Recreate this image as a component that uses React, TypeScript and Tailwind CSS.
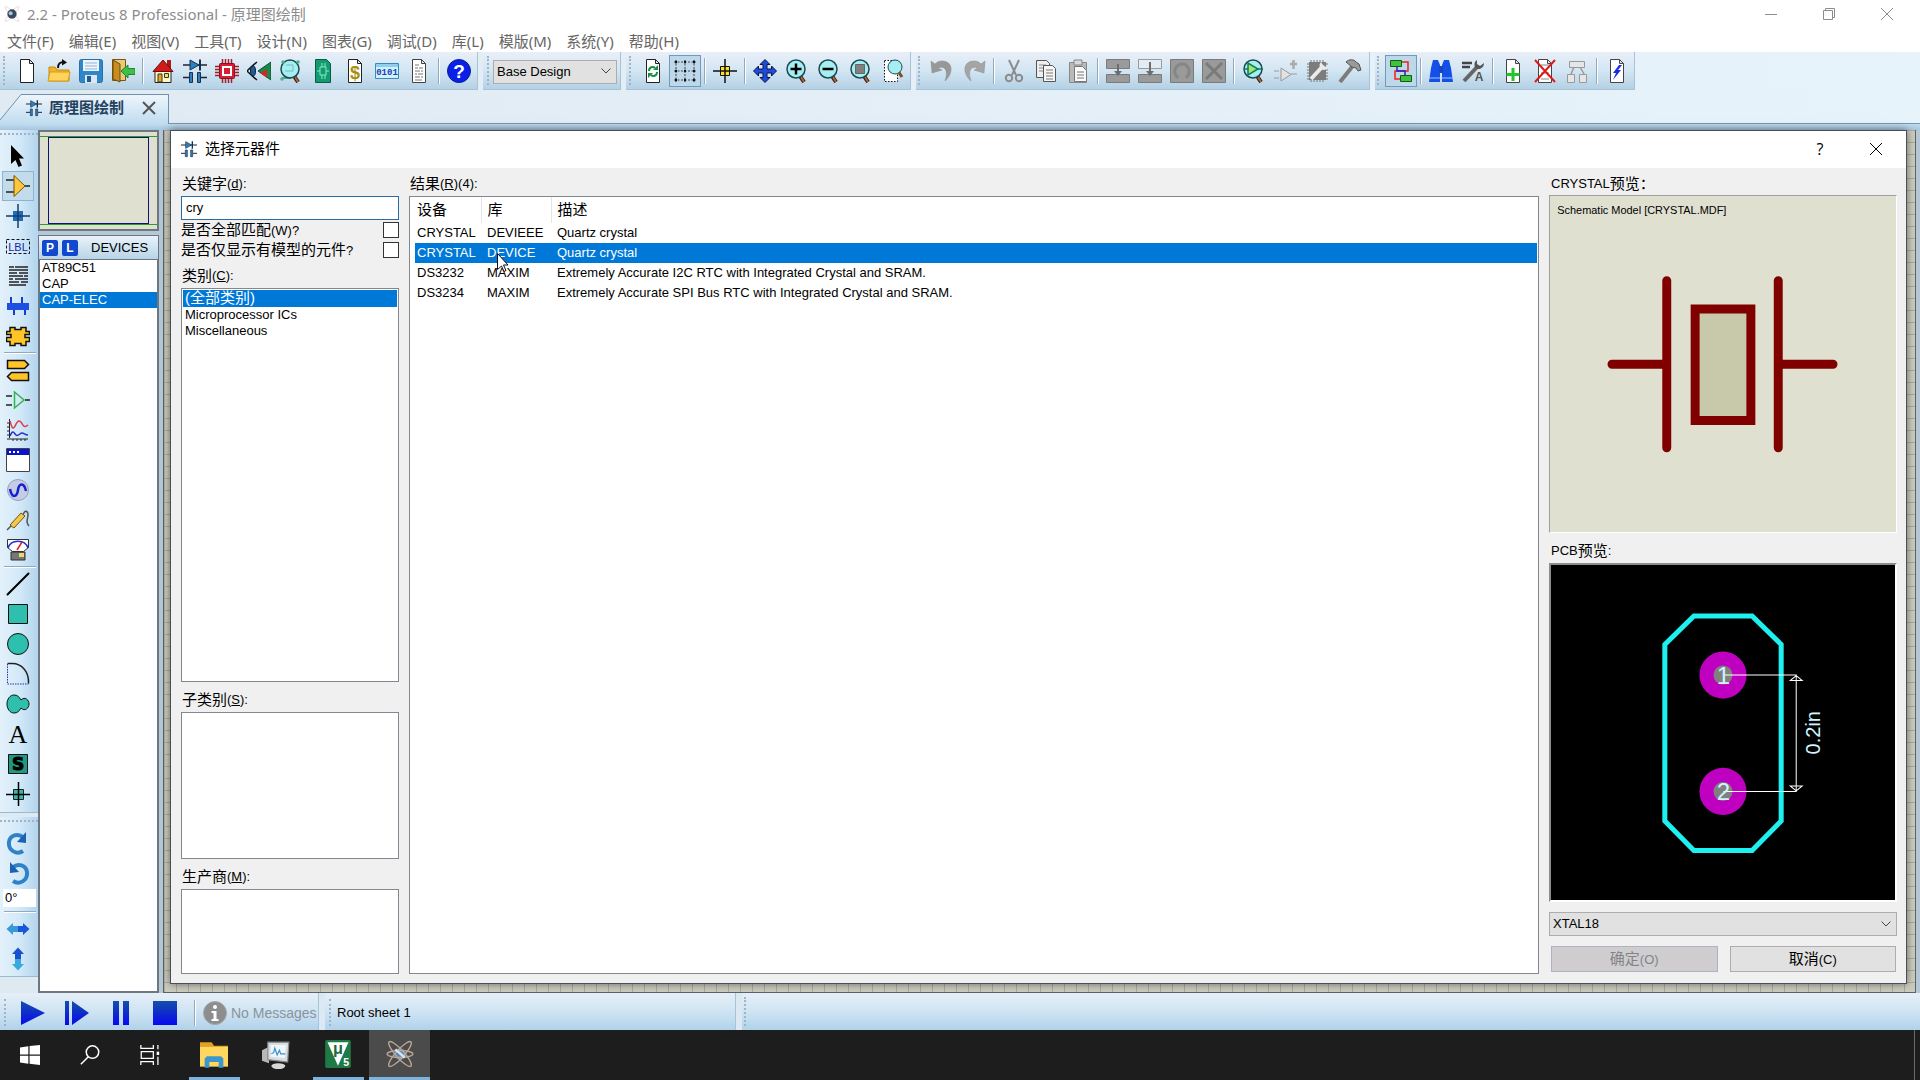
/**
 * 原理图绘制主窗口 + 选择元器件对话框
 */

import { useState } from 'react';
import type { ReactNode } from 'react';

interface Part { device: string; lib: string; desc: string; }
interface Tool { name: string; icon: ReactNode; active?: boolean; }

const MENUS = ['文件(F)', '编辑(E)', '视图(V)', '工具(T)', '设计(N)', '图表(G)', '调试(D)', '库(L)', '模版(M)', '系统(Y)', '帮助(H)'];
const DEVICES = ['AT89C51', 'CAP', 'CAP-ELEC'];
const CATEGORIES = ['(全部类别)', 'Microprocessor ICs', 'Miscellaneous'];
const PARTS: Part[] = [
  { device: 'CRYSTAL', lib: 'DEVIEEE', desc: 'Quartz crystal' },
  { device: 'CRYSTAL', lib: 'DEVICE', desc: 'Quartz crystal' },
  { device: 'DS3232', lib: 'MAXIM', desc: 'Extremely Accurate I2C RTC with Integrated Crystal and SRAM.' },
  { device: 'DS3234', lib: 'MAXIM', desc: 'Extremely Accurate SPI Bus RTC with Integrated Crystal and SRAM.' },
];

function Svg({ children, size = 'w-6 h-6' }: { children: ReactNode; size?: string }) {
  return <svg viewBox="0 0 24 24" className={`${size} shrink-0`} fill="none" aria-hidden="true">{children}</svg>;
}

// ── 共用图形 ──
const page = <path d="M5.500.500h9l4 4v19h-13zM14.500.500v4h4" fill="#fff" stroke="#222" />;
const greyPage = <path d="M5.500.500h9l4 4v19h-13zM14.500.500v4h4" fill="#fff" stroke="#444" />;
const lens = (
  <>
    <path d="M15 17l4 6" stroke="#222" strokeWidth="4" />
    <path d="M16 18l3 5" stroke="#b8622c" strokeWidth="2" />
    <circle cx="11" cy="10" r="9" fill="#a5eef2" stroke="#1c4a50" strokeWidth="1.5" />
  </>
);
const schematic = (
  <>
    <path d="M0 6h24M0 18.500h6M18 18.500h6" stroke="#223" strokeWidth="1.5" />
    <path d="M7 1v10l9-5z" fill="#2f80c0" stroke="#16324e" />
    <path d="M17 .500v11" stroke="#16324e" strokeWidth="2" />
    <path d="M6.500 13.500h3v10h-3zM14.500 13.500h3v10h-3z" fill="#2f80c0" stroke="#16324e" />
  </>
);
const greyBlocks = <path d="M.500.500h23v9H.500zM.500 15.500h23v8H.500z" fill="#9a9a9a" stroke="#7b7b7b" />;

const FILE_TOOLS: Tool[] = [
  { name: '新建', icon: page },
  { name: '打开', icon: <><path d="M2 22V8h6l2 3h12v11z" fill="#f0b428" stroke="#c98a10" /><path d="M1 22l2-9h20l-2 9z" fill="#ffd45a" stroke="#d79a18" /><path d="M11 9c0-5 2-6 6-6" stroke="#111" strokeWidth="2" /><path d="M15 0l5 3.500-5 3z" fill="#111" /></> },
  { name: '保存', icon: <><rect x=".5" y=".5" width="23" height="23" rx="2" fill="#2f86c8" stroke="#2770ab" /><path d="M4 1h16v11H4z" fill="#eef4fa" /><path d="M6 4h12M6 7h12M6 10h12" stroke="#8fb6d6" /><path d="M6 16h12v8H6z" fill="#dfe7ee" /><path d="M8 17h4v6H8z" fill="#1d5c96" /></> },
  { name: '退出', icon: <><path d="M1.500.500h13v21h-13z" fill="#e9c878" stroke="#7c5410" /><path d="M2 1l7 4v18l-7-3z" fill="#c98d1d" stroke="#6b4a10" /><path d="M10 12l7-6v3.500h7v6h-7V19z" fill="#3cc04a" stroke="#1e8a2c" /></> },
];
const MODULE_TOOLS: Tool[] = [
  { name: '主页', icon: <><path d="M4 11v12.500h16V11" fill="#fff6c8" stroke="#222" /><path d="M16 1h4v9h-4z" fill="#b01818" /><path d="M12 1L2 12.500h20z" fill="#d31a1a" stroke="#6e0c0c" /><path d="M7 15h4v8H7z" fill="#e8a818" stroke="#333" /><path d="M13.500 14.500h4v4h-4z" fill="#ffe040" stroke="#333" /></> },
  { name: '原理图', icon: schematic },
  { name: 'PCB布版', icon: <><path d="M7.500 0v24M10.500 0v24M13.500 0v24M16.500 0v24M0 7.500h24M0 10.500h24M0 13.500h24M0 16.500h24" stroke="#a02030" strokeWidth="1.5" /><rect x="4.500" y="4.500" width="15" height="15" rx="1" fill="#d81c34" stroke="#8e0f20" /><path d="M7 7h10v10H7z" fill="#fff" /><path d="M9 9h6v6H9z" fill="#d81c34" /></> },
  { name: '3D观察', icon: <><path d="M10 3C5 7 2 10 0 12c3 3 6 6 10 9" stroke="#111" strokeWidth="1.5" /><ellipse cx="6" cy="12" rx="2.500" ry="5" fill="#1d5d9c" stroke="#123" /><path d="M24 3v18L11 12z" fill="#188a48" stroke="#0c5028" /><path d="M20 10v9l-7-5z" fill="#d02828" /></> },
  { name: 'Gerber', icon: <><path d="M4 3h12M3 19h9" stroke="#2a8f70" strokeWidth="1.5" />{lens}<circle cx="4" cy="3" r="1.800" fill="#4bb394" /><circle cx="19" cy="3" r="1.800" fill="#4bb394" /><path d="M7 6h7v6H6" stroke="#6fc0bd" /><circle cx="3" cy="20" r="1.800" fill="#4bb394" /></> },
  { name: '设计浏览', icon: <><path d="M4.500.500h11l4 4v19h-15z" fill="#149a70" stroke="#0b5c45" /><path d="M9 8h6v8H9zM11 8V4M14 8V4M11 16v4M14 16v4M6 12h3M15 12h3" stroke="#7ff0c0" /></> },
  { name: '物料清单', icon: <>{page}<text x="12" y="20" textAnchor="middle" fontSize="18" fontWeight="700" fill="#a89010" fontFamily="Liberation Sans">$</text></> },
  { name: '源代码', icon: <><path d="M.500 4.500h23v15H.500z" fill="#d2f1fb" stroke="#3a8ab8" /><path d="M1 5h22v3H1z" fill="#8cd0ee" /><text x="12" y="15.500" textAnchor="middle" fontSize="9" fontWeight="700" fill="#1540b8" fontFamily="Liberation Mono">0101</text></> },
  { name: '工程说明', icon: <>{greyPage}<path d="M8 6h4M8 9h3M12 9h4M8 12h5M14 12h2M8 15h2M11 15h5M8 18h5M14 18h2M8 21h7" stroke="#777" /></> },
];
const HELP_TOOLS: Tool[] = [
  { name: '帮助', icon: <><circle cx="12" cy="12" r="11.500" fill="#0a1fe8" stroke="#0a1f96" /><text x="12" y="19" textAnchor="middle" fontSize="19" fontWeight="700" fill="#fff" fontFamily="Liberation Sans">?</text></> },
];
const VIEW_TOOLS: Tool[] = [
  { name: '刷新', icon: <>{page}<path d="M8 12c0-4 4-5 6-3M16 13c0 4-4 5-6 3" stroke="#189040" strokeWidth="2" /><path d="M12 11l5 0V6zM12 14H7v5z" fill="#189040" /></> },
  { name: '网格', active: true, icon: <><path d="M1 3h22M1 12h22M1 21h22M3 1v22M12 1v22M21 1v22" stroke="#445" strokeDasharray="2 1.500" /><path d="M2 3h2M11 3h2M20 3h2M2 12h2M11 12h2M20 12h2M2 21h2M11 21h2M20 21h2" stroke="#111" strokeWidth="2.500" /></> },
];
const ORIGIN_TOOLS: Tool[] = [
  { name: '原点', icon: <><path d="M7.500 7.500h9v9h-9z" fill="#ffe21f" stroke="#111" /><path d="M0 12h24M12 0v24" stroke="#111" strokeWidth="1.500" /></> },
];
const ZOOM_TOOLS: Tool[] = [
  { name: '平移', icon: <path d="M12 .500l5 5h-3v4.500h4.500V7l5 5-5 5v-3H14v4.500h3l-5 5-5-5h3V14H5.500v3l-5-5 5-5v3H10V5.500H7z" fill="#1c4be0" stroke="#0a1540" /> },
  { name: '放大', icon: <>{lens}<path d="M5.500 10h11M11 4.500v11" stroke="#000" strokeWidth="2.500" /></> },
  { name: '缩小', icon: <>{lens}<path d="M5.500 10h11" stroke="#000" strokeWidth="2.500" /></> },
  { name: '查看整张', icon: <>{lens}<path d="M6.500 5.500h9v9h-9z" fill="#808080" stroke="#666" /></> },
  { name: '查看区域', icon: <><path d="M3.500 1.500h13v21h-13z" fill="#fff" stroke="#111" strokeDasharray="1.500 1.500" /><path d="M17 12l4 6" stroke="#8a4a20" strokeWidth="3" /><circle cx="14" cy="8" r="7" fill="#a5eef2" stroke="#1c4a50" /></> },
];
const UNDO_TOOLS: Tool[] = [
  { name: '撤销', icon: <path d="M1 2l1 12 10-3-4-2c6-3 11 2 7 13 9-8 8-20-3-20-3 0-5 1-7 3z" fill="#989898" stroke="#888" strokeWidth=".5" /> },
  { name: '重做', icon: <path d="M23 2l-1 12-10-3 4-2C10 6 5 11 9 22 0 14 1 2 12 2c3 0 5 1 7 3z" fill="#a5a5a5" stroke="#888" strokeWidth=".5" /> },
];
const CLIP_TOOLS: Tool[] = [
  { name: '剪切', icon: <><path d="M7 1l7 15M17 1l-7 15" stroke="#8c8c8c" strokeWidth="2" /><circle cx="7" cy="19" r="3.200" stroke="#8c8c8c" strokeWidth="2" /><circle cx="17" cy="19" r="3.200" stroke="#8c8c8c" strokeWidth="2" /></> },
  { name: '复制', icon: <><path d="M2.500 1.500h10l3 3v14h-13z" fill="#eee" stroke="#555" /><path d="M5 6h7M5 9h7M5 12h7" stroke="#888" /><path d="M9.500 6.500h9l3 3v13h-12z" fill="#f6f6f6" stroke="#555" /><path d="M12 11h7M12 14h7M12 17h7M12 20h7" stroke="#777" /></> },
  { name: '粘贴', icon: <><path d="M3.500 3.500h17v20h-17z" fill="#b9b9b9" stroke="#888" /><path d="M8 1h8v5H8z" fill="#d8d8d8" stroke="#888" /><path d="M8.500 7.500h8l4 4v11h-12z" fill="#fafafa" stroke="#777" /><path d="M11 13h7M11 16h7M11 19h7" stroke="#777" /></> },
];
const BLOCK_TOOLS: Tool[] = [
  { name: '块复制', icon: <>{greyBlocks}<path d="M12 5v10" stroke="#6d6d6d" strokeWidth="2" /><path d="M8 12h8l-4 5z" fill="#6d6d6d" /></> },
  { name: '块移动', icon: <><path d="M.500.500h23v9H.500z" fill="#e4ecf3" stroke="#999" /><path d="M.500 15.500h23v8H.500z" fill="#9a9a9a" stroke="#7b7b7b" /><path d="M12 3v12" stroke="#6d6d6d" strokeWidth="2" /><path d="M8 12h8l-4 5z" fill="#6d6d6d" /></> },
  { name: '块旋转', icon: <><path d="M.500.500h23v23H.500z" fill="#9a9a9a" stroke="#7b7b7b" /><path d="M8 19c-7-7-1-14 4-14s11 7 4 14" stroke="#868686" strokeWidth="3" /></> },
  { name: '块删除', icon: <><path d="M.500.500h23v23H.500z" fill="#9a9a9a" stroke="#7b7b7b" /><path d="M4 4l16 16M20 4L4 20" stroke="#7a7a7a" strokeWidth="3" /></> },
];
const LIB_TOOLS: Tool[] = [
  { name: '从库拾取', icon: <>{lens}<path d="M3 10h18" stroke="#157a5a" strokeWidth="1.500" /><path d="M6 4v12l10-6z" fill="#9be872" stroke="#157a5a" strokeWidth="1.500" /></> },
  { name: '制作元件', icon: <><path d="M0 12h5M0 19h5M17 15h6M7 9v13l10-6.500z" fill="#e2e2e2" stroke="#999" /><path d="M16 5h7M19.500 1v9" stroke="#aaa" strokeWidth="2.500" /></> },
  { name: '封装工具', icon: <><path d="M5 1v22M8 1v22M11 1v22M14 1v22M17 1v22M1 5h21M1 8h21M1 11h21M1 14h21M1 17h21M1 20h21" stroke="#777" /><path d="M3 3h17v18H3z" fill="#7c7c7c" /><path d="M5 20L17 7" stroke="#eaeaea" strokeWidth="4" /><path d="M15 3c-3 3-1 8 3 8 3 0 5-3 5-6l-3 3-3-2z" fill="#eaeaea" /></> },
  { name: '分解', icon: <><path d="M2 23L14 8" stroke="#7c7c7c" strokeWidth="4" /><path d="M8 3c3-3 8-3 10 0l3 2 2 6-3 1-2-3-4-1z" fill="#9a9a9a" stroke="#555" /></> },
];
const WIRE_TOOLS: Tool[] = [
  { name: '自动连线', active: true, icon: <><path d="M13 3h6v9H6v8h5" stroke="#e22" strokeWidth="1.500" /><path d="M8 7v5h8v5" stroke="#22c" strokeWidth="1.500" /><path d="M1.500 1.500h11v6h-11zM11.500 16.500h11v6h-11z" fill="#3cc43c" stroke="#145a14" /></> },
];
const SEARCH_TOOLS: Tool[] = [
  { name: '查找', icon: <><path d="M4 1h5l2 5v17H0L2 9zM15 1h5l2 8 2 14H13V6z" fill="#1450e6" /><path d="M10 7h4v7h-4z" fill="#1746c0" /><path d="M0 19h11M13 19h11" stroke="#9cc4ff" /></> },
  { name: '属性工具', icon: <><path d="M1 4h10M1 8h8" stroke="#444" strokeWidth="2.500" /><path d="M3 22L17 7" stroke="#666" strokeWidth="4" /><path d="M16 1c-4 2-3 9 1 9 3 0 6-2 6-6l-4 3-3-2z" fill="#555" /><text x="18" y="22" textAnchor="middle" fontSize="12" fontWeight="700" fill="#555" fontFamily="Liberation Sans">A</text></> },
];
const SHEET_TOOLS: Tool[] = [
  { name: '新建页', icon: <>{greyPage}<path d="M5.500 15.500h13M12 9v13" stroke="#22c52c" strokeWidth="3" /></> },
  { name: '删除页', icon: <>{greyPage}<path d="M8 6h8M8 14h8M8 20h8" stroke="#888" /><path d="M2 1l20 22M22 1L2 23" stroke="#dd1a1a" strokeWidth="2" /></> },
  { name: '返回父页', icon: <><path d="M9 8L6 15M15 8l4 7" stroke="#999" strokeWidth="1.500" /><path d="M4.500 2.500h15v6h-15zM2.500 15.500h7v8h-7zM14.500 15.500h7v8h-7z" fill="#e6e6e6" stroke="#999" /></> },
];
const ERC_TOOLS: Tool[] = [
  { name: '电气检查', icon: <>{greyPage}<path d="M14 6l-6 8h3l-3 7 8-10h-3l4-5z" fill="#1a2ce0" /></> },
];

// ── 左侧模式工具 ──
const MODE_TOOLS: Tool[] = [
  { name: '选择', icon: <path d="M5 1v19l4.500-4 3 7 3.500-1.500-3-7H18z" fill="#000" /> },
  { name: '元件', active: true, icon: <><path d="M0 6h8M0 18h8M18 12h6" stroke="#222" strokeWidth="1.500" /><path d="M8 1.500v21L19 12z" fill="#ffc83c" stroke="#7a5200" /></> },
  { name: '节点', icon: <><path d="M7 7h10v10H7z" fill="#1c6cb8" /><path d="M0 12h24M12 0v24" stroke="#1a3a66" strokeWidth="1.500" /></> },
  { name: '标签', icon: <><path d="M.500 5.500h23v14H.500z" stroke="#111" strokeDasharray="3 2" /><text x="12" y="17" textAnchor="middle" fontSize="11" fill="#1624a8" fontFamily="Liberation Sans">LBL</text></> },
  { name: '文本', icon: <path d="M3 3h5M9 3h13M3 6h19M3 9h8M13 9h9M3 12h14M18 12h4M3 15h4M9 15h13M3 18h10M15 18h7M3 21h17" stroke="#222" strokeWidth="1.500" /> },
  { name: '总线', icon: <><path d="M5 3v9M16 3v9M8 12v9M19 12v9" stroke="#1a3ad0" strokeWidth="2" /><path d="M1 9h22v7H1z" fill="#1c50e0" /></> },
  { name: '子电路', icon: <path d="M4 3.500h5v2h6v-2h5v4h3.500v3H19v3h4.500v4H20v4h-5v-2H9v2H4v-4H.500v-4H5v-3H.500v-3H4z" fill="#ffc427" stroke="#111" strokeWidth="1.500" /> },
];
const GADGET_TOOLS: Tool[] = [
  { name: '终端', icon: <path d="M1.500 2.500h17l4 4-4 4h-17zM22.500 14.500h-17l-4 4 4 4h17z" fill="#ffc427" stroke="#111" strokeWidth="1.500" /> },
  { name: '管脚', icon: <><path d="M0 8h6M0 17h6M19 12h5" stroke="#222" strokeWidth="1.500" /><path d="M8.500 4v16L18 12z" stroke="#32b450" strokeWidth="1.500" /></> },
  { name: '图表', icon: <><path d="M3.500 1v19M1 21h21M1 5h2M1 9h2M1 13h2M1 17h2M7 23v-2M11 23v-2M15 23v-2M19 23v-2" stroke="#222" /><path d="M4 3c4 16 5 0 9 0s3 9 9 4" stroke="#d83a4c" strokeWidth="1.500" /><path d="M4 18c3-7 4-3 6-1s4-2 6-2 3 2 6 2" stroke="#2230d0" strokeWidth="1.500" /></> },
  { name: '弹出窗', icon: <><path d="M.500.500h23v23H.500z" fill="#fff" stroke="#444" /><path d="M1 1h22v6H1z" fill="#0a14c8" /><path d="M3 4h2M7 4h2M11 4h2" stroke="#fff" strokeWidth="2" /></> },
  { name: '激励源', icon: <><circle cx="12" cy="12" r="10.500" fill="#c6cbe6" stroke="#9aa0b8" /><path d="M4 11c2 10 7 8 8 1s6-8 8 1" stroke="#1220d0" strokeWidth="2.500" /></> },
  { name: '探针', icon: <><path d="M1 22l6-6M17 7c2-6 5-4 5 0s-3 7 1 11" stroke="#555" strokeWidth="1.500" /><path d="M4 17L15 5l4 3L8 20z" fill="#f5c84c" stroke="#6e5210" /></> },
  { name: '仪表', icon: <><path d="M1.500 1.500h21v8l-5 4h-11l-5-4z" fill="#fff" stroke="#333" /><path d="M2 10C5 1 19 1 22 10" stroke="#2230d0" strokeWidth="1.500" /><path d="M11 12l5-8" stroke="#e02020" strokeWidth="1.500" /><path d="M5 14h14v8H5z" fill="#777" stroke="#333" /><path d="M13 15h5v4h-5z" fill="#f0d868" /></> },
];
const DRAW_TOOLS: Tool[] = [
  { name: '直线', icon: <path d="M1.500 22.500l21-21" stroke="#000" strokeWidth="2" strokeLinecap="round" /> },
  { name: '方框', icon: <path d="M2.500 2.500h19v19h-19z" fill="#2fbfae" stroke="#111" /> },
  { name: '圆形', icon: <circle cx="12" cy="12" r="10.500" fill="#2fbfae" stroke="#111" /> },
  { name: '弧线', icon: <><path d="M1.500 2v20h21" stroke="#2a36b0" strokeDasharray="1.500 1" /><path d="M1.500 1.500h5c9 0 16 8 16 18v2" stroke="#222" strokeWidth="1.500" /></> },
  { name: '闭合线', icon: <path d="M8 3c4 0 5 2 7 5 4-4 8 0 8 4s-4 8-8 4c-2 3-3 5-7 5s-7-4-7-9 3-9 7-9z" fill="#2fbfae" stroke="#111" /> },
  { name: '文字', icon: <text x="12" y="21" textAnchor="middle" fontSize="26" fill="#000" fontFamily="Liberation Serif">A</text> },
  { name: '符号', icon: <><path d="M2.500 2.500h19v19h-19z" fill="#1f9a80" stroke="#111" /><text x="12" y="18" textAnchor="middle" fontSize="17" fontWeight="700" fill="#000" stroke="#000" fontFamily="DejaVu Sans">S</text></> },
  { name: '标记', icon: <><path d="M7.500 7.500h10v10h-10z" fill="#46b09c" stroke="#123" /><path d="M0 12.500h24M12.500 0v24" stroke="#000" strokeWidth="1.500" /></> },
];
const ROTATE_TOOLS: Tool[] = [
  { name: '顺时针', icon: <><path d="M17 20c-6 4-15 0-14-9 1-7 9-9 14-5" stroke="#2f82c8" strokeWidth="4" /><path d="M20 1v11l-9-1z" fill="#1c62b0" /></> },
  { name: '逆时针', icon: <><path d="M7 20c6 4 15 0 14-9-1-7-9-9-14-5" stroke="#2f82c8" strokeWidth="4" /><path d="M4 1v11l9-1z" fill="#1c62b0" /></> },
];
const FLIP_TOOLS: Tool[] = [
  { name: '水平镜像', icon: <><path d="M12 9H7V6L.500 12 7 18v-3h5z" fill="#3898d8" /><path d="M12 9h5V6l6.500 6L17 18v-3h-5z" fill="#1a56d8" /></> },
  { name: '垂直镜像', icon: <><path d="M9 12V7H6L12 .500 18 7h-3v5z" fill="#1a50d0" /><path d="M9 12v5H6l6 6.500 6-6.500h-3v-5z" fill="#38a8e0" /></> },
];
const RUN_TOOLS: Tool[] = [
  { name: '运行', icon: <path d="M0 0v24l24-12z" fill="url(#run)" /> },
  { name: '单步', icon: <path d="M0 0h4v24H0zM7 0v24l17-12z" fill="url(#run)" /> },
  { name: '暂停', icon: <path d="M4 0h6v24H4zM14 0h6v24h-6z" fill="url(#run)" /> },
  { name: '停止', icon: <path d="M0 0h24v24H0z" fill="url(#run)" /> },
];

function ToolButtons({ tools }: { tools: Tool[] }) {
  return (
    <>
      {tools.map(t => (
        <button key={t.name} aria-label={t.name}
          className={`w-8 h-8 flex items-center justify-center border ${t.active ? 'border-[#7399b8] bg-[#bcd8ea]' : 'border-transparent'}`}>
          <Svg>{t.icon}</Svg>
        </button>
      ))}
    </>
  );
}

function SideButtons({ tools }: { tools: Tool[] }) {
  return (
    <>
      {tools.map(t => (
        <button key={t.name} aria-label={t.name}
          className={`w-8 h-[30px] ml-0.5 flex items-center justify-center border ${t.active ? 'border-[#8fb2cc] bg-[#c2dcec]' : 'border-transparent'}`}>
          <Svg>{t.icon}</Svg>
        </button>
      ))}
    </>
  );
}

const Sep = () => <div className="w-2 h-[26px] flex justify-center"><div className="w-0.5 border-l border-[#93a9ba] bg-white" /></div>;
const SideSep = () => <div className="h-1 ml-1 mr-0.5 flex flex-col justify-center"><div className="h-0.5 border-t border-[#93a9ba] bg-white" /></div>;
const Grip = () => <div className="self-stretch my-1 w-1 border-l-2 border-dotted border-[#9fb4c6]" />;

function Bar({ children, pad }: { children: ReactNode; pad: string }) {
  return (
    <div className={`flex items-center h-full bg-linear-to-b from-[#e9eff7] via-[#d3e6f3] to-[#b4d1e5] border-r border-b border-[#a9c3d6] ${pad}`}>
      {children}
    </div>
  );
}

const Cn = ({ children }: { children: ReactNode }) => <span className="text-[15px]">{children}</span>;

function PartPreview() {
  return (
    <svg viewBox="0 0 345 337" className="w-full h-full" aria-label="CRYSTAL">
      <text x="6" y="18" fontSize="11" fill="#000">Schematic Model [CRYSTAL.MDF]</text>
      <g stroke="#800000" strokeWidth="9" strokeLinecap="round" fill="none">
        <path d="M116 85v168M228 85v168M61 169h55M228 169h55" />
        <path d="M144.500 113.500h56v112h-56z" fill="#c8c8aa" strokeLinecap="butt" />
      </g>
    </svg>
  );
}

function PcbPreview() {
  return (
    <svg viewBox="0 0 343 334" className="w-full h-full" aria-label="XTAL18">
      <path d="M142.500 50.500h58l29 28.500v176l-29 29.500h-58l-29-29.500V79z" fill="none" stroke="#1ef0f0" strokeWidth="5" />
      <g fill="#c000c0"><circle cx="171.500" cy="109.500" r="23.500" /><circle cx="171.500" cy="225.500" r="23.500" /></g>
      <g fill="#808080"><circle cx="171.500" cy="109.500" r="9.500" /><circle cx="171.500" cy="225.500" r="9.500" /></g>
      <path d="M172 109.500h73M172 225.500h73M244.500 110v115M244.500 110l-6 5h12zM244.500 225l-6-5h12z" fill="none" stroke="#fff" />
      <g fill="#d0f4ff" fontSize="24" textAnchor="middle">
        <text x="172" y="118">1</text>
        <text x="172" y="234">2</text>
        <text fontSize="20" transform="translate(268 167) rotate(-90)">0.2in</text>
      </g>
    </svg>
  );
}

function Combo({ label, value, className }: { label: string; value: string; className: string }) {
  return (
    <div className={`relative h-6 ${className}`}>
      <select aria-label={label} defaultValue={value}
        className="w-full h-full appearance-none bg-[#e1e1e1] border border-[#adadad] pl-[3px] text-[13px] leading-5 outline-none">
        <option>{value}</option>
      </select>
      <svg viewBox="0 0 10 6" className="absolute right-1.5 top-[9px] w-2.5 h-1.5 pointer-events-none" fill="none" stroke="#444"><path d="M.500.500L5 5 9.500.500" /></svg>
    </div>
  );
}

function PickDialog() {
  const [keyword, setKeyword] = useState('cry');
  const [selected, setSelected] = useState(1);
  const [category, setCategory] = useState(0);

  return (
    <section role="dialog" aria-label="选择元器件" className="relative flex-1 min-w-0 flex flex-col bg-[#f0f0f0] border border-[#46505a] shadow-[0_0_8px_rgba(0,0,0,0.5)]">
      <header className="h-[37px] shrink-0 bg-white flex items-center pl-2.5 pr-3.5 pb-0.5">
        <Svg size="w-4 h-5">{schematic}</Svg>
        <h2 className="ml-2 text-[15px] font-['Open_Sans','Noto_Sans_CJK_SC',sans-serif]">选择元器件</h2>
        <button aria-label="帮助" className="ml-auto w-8 text-base leading-5 font-['Open_Sans',sans-serif]">?</button>
        <button aria-label="关闭" className="ml-6 w-8 flex justify-center">
          <svg viewBox="0 0 14 14" className="w-3.5 h-3.5" stroke="#000"><path d="M1 1l12 12M13 1L1 13" /></svg>
        </button>
      </header>

      <div className="flex-1 min-h-0 flex pl-2.5 pr-[9px] pb-[9px] pt-1 text-[13px] leading-4">
        {/* 筛选条件 */}
        <div className="w-[218px] shrink-0 flex flex-col">
          <label htmlFor="keyword" className="h-6 flex items-center pl-px"><Cn>关键字</Cn>(<u>d</u>):</label>
          <input id="keyword" value={keyword} onChange={e => setKeyword(e.target.value)}
            className="h-6 shrink-0 bg-white border border-[#2a6ca8] px-1 pb-0.5 outline-none" />
          <label className="h-5 flex items-center justify-between whitespace-nowrap"><span><Cn>是否全部匹配</Cn>(W)?</span>
            <input type="checkbox" className="appearance-none w-4 h-4 bg-white border border-[#333]" /></label>
          <label className="h-5 flex items-center justify-between whitespace-nowrap"><span><Cn>是否仅显示有模型的元件</Cn>?</span>
            <input type="checkbox" className="appearance-none w-4 h-4 bg-white border border-[#333]" /></label>
          <div id="cat" className="h-7 flex items-end pb-1 pl-px"><Cn>类别</Cn>(<u>C</u>):</div>
          <ul role="listbox" aria-labelledby="cat" className="flex-1 bg-white border border-[#828790] p-px">
            {CATEGORIES.map((c, i) => (
              <li key={c} role="option" aria-selected={i === category} onClick={() => setCategory(i)}
                className={`pl-0.5 whitespace-nowrap ${i === category ? 'bg-[#0078d7] text-white' : ''} ${i === 0 ? 'h-[17px] text-[15px]' : 'h-4'}`}>{c}</li>
            ))}
          </ul>
          <div id="sub" className="h-[30px] flex items-center pt-1.5 pl-px"><Cn>子类别</Cn>(<u>S</u>):</div>
          <ul role="listbox" aria-labelledby="sub" className="h-[147px] bg-white border border-[#828790]" />
          <div id="maker" className="h-[30px] flex items-center pt-1.5 pl-px"><Cn>生产商</Cn>(<u>M</u>):</div>
          <ul role="listbox" aria-labelledby="maker" className="h-[85px] bg-white border border-[#828790]" />
        </div>

        {/* 搜索结果 */}
        <div className="flex-1 min-w-0 flex flex-col ml-2.5">
          <div className="h-6 shrink-0 flex items-center pl-px"><Cn>结果</Cn>(<u>R</u>)(4):</div>
          <div className="relative flex-1 bg-white border border-[#828790] pl-[5px] pr-px">
            <table className="w-full border-collapse text-left whitespace-nowrap">
              <thead>
                <tr className="h-[26px] text-[15px]">
                  <th className="w-[66px] pl-0.5 font-normal border-r border-[#e5e5e5]">设备</th>
                  <th className="w-[70px] pl-1.5 font-normal border-r border-[#e5e5e5]">库</th>
                  <th className="pl-1.5 font-normal">描述</th>
                </tr>
              </thead>
              <tbody>
                {PARTS.map((p, i) => (
                  <tr key={p.device + p.lib} onClick={() => setSelected(i)}
                    className={`h-5 ${i === selected ? 'bg-[#0078d7] text-white' : ''}`}>
                    <td className="pl-0.5">{p.device}</td>
                    <td className="pl-1.5">{p.lib}</td>
                    <td className="pl-1.5">{p.desc}</td>
                  </tr>
                ))}
              </tbody>
            </table>
            {/* 鼠标指针 */}
            <svg viewBox="0 0 12 19" className="absolute left-[87px] top-[56px] w-3 h-[19px]"><path d="M.500.500v16l4-3.500 2.500 5.500 2-1-2.500-5.500H11z" fill="#fff" stroke="#111" /></svg>
          </div>
        </div>

        {/* 预览 */}
        <div className="w-[348px] shrink-0 flex flex-col ml-[10px]">
          <div className="h-[23px] shrink-0 flex items-center pl-0.5">CRYSTAL<Cn>预览：</Cn></div>
          <div className="flex-1 min-h-0 bg-[#e0e0d0] border border-[#a0a0a0] border-r-white border-b-white"><PartPreview /></div>
          <div className="h-[30px] shrink-0 flex items-center pt-1.5 pl-0.5">PCB<Cn>预览</Cn>:</div>
          <div className="flex-1 min-h-0 bg-black border-2 border-[#8c8c8c] border-r-white border-b-white"><PcbPreview /></div>
          <Combo label="封装" value="XTAL18" className="mt-2.5" />
          <div className="flex gap-3 mt-2.5 mb-0.5 pl-0.5 pr-px">
            <button disabled className="flex-1 h-[26px] bg-[#cfcdce] border border-[#aeb2c4] text-[#83838b]"><Cn>确定</Cn>(O)</button>
            <button className="flex-1 h-[26px] bg-[#e1e1e1] border border-[#adadad]"><Cn>取消</Cn>(C)</button>
          </div>
        </div>
      </div>
    </section>
  );
}

function Taskbar() {
  return (
    <nav className="h-[50px] shrink-0 bg-[#1d1d1d] flex items-stretch pr-[5px]">
      <button aria-label="开始" className="w-[60px] flex items-center justify-center">
        <Svg size="w-5 h-5"><path d="M0 3l10-1.500v10H0zM11.500 1.300L24 0v11.500H11.500zM0 13h10v9.500L0 21zM11.500 13H24v11l-12.500-1.500z" fill="#fff" /></Svg>
      </button>
      <button aria-label="搜索" className="w-[60px] flex items-center justify-center">
        <Svg size="w-5 h-5"><circle cx="15" cy="8.500" r="7.500" stroke="#fff" strokeWidth="1.800" /><path d="M10 14L1 23" stroke="#fff" strokeWidth="1.800" /></Svg>
      </button>
      <button aria-label="任务视图" className="w-[63px] flex items-center justify-center pr-1">
        <Svg size="w-5 h-5"><path d="M1 0v4h15V0M1 24v-4h15v4M1.500 8h14.500v8H1.500zM21.500 0v5M21.500 14v10" stroke="#fff" strokeWidth="1.500" /><path d="M20 8h3v4h-3z" fill="#fff" /></Svg>
      </button>
      <button aria-label="文件资源管理器" className="w-[62px] flex flex-col items-center pt-[11px]">
        <Svg size="w-7 h-7"><path d="M0 1h10l2 3h12v6H0z" fill="#e0a020" /><path d="M0 5h24v17H0z" fill="#ffd75e" /><path d="M4 23v-8l2-2h12l2 2v8h-4v-5H8v5z" fill="#3d96cc" /></Svg>
        <span className="mt-auto w-[51px] h-[3px] bg-[#7cb4e0]" />
      </button>
      <button aria-label="监视器" className="w-[62px] flex flex-col items-center pt-[11px]">
        <Svg size="w-7 h-7"><path d="M0 8l6-3v14l-6-2z" fill="#b8b8b8" /><path d="M5 1h18l-1 17-17-2z" fill="#d8dde2" stroke="#888" /><path d="M7.500 3.500h13l-1 11-12-1z" fill="#eef6fc" /><path d="M8 11l2-1 1-4 2 6 2-4 1 3h4" stroke="#3a90c8" /><ellipse cx="14" cy="21.500" rx="6" ry="2.500" fill="#d8d8d8" /></Svg>
      </button>
      <button aria-label="Keil uVision5" className="w-[62px] flex flex-col items-center pt-[10px]">
        <Svg size="w-7 h-7"><rect x="1" y="0" width="22" height="24" rx="1.500" fill="#1f7a46" /><path d="M3 2h18l-9 20z" fill="#fff" /><text x="12" y="12" textAnchor="middle" fontSize="14" fontWeight="700" fill="#1f6a40" fontFamily="Liberation Sans">μ</text><text x="19" y="22" textAnchor="middle" fontSize="9" fontWeight="700" fill="#fff" fontFamily="Liberation Sans">5</text></Svg>
        <span className="mt-auto w-[51px] h-[3px] bg-[#7cb4e0]" />
      </button>
      <button aria-label="Proteus 8" className="w-[61px] flex flex-col items-center pt-[10px] bg-[#4b4b4b]">
        <Svg size="w-7 h-7"><circle cx="12" cy="12" r="5" fill="#5a8ab8" /><g stroke="#b9a595" strokeWidth="1.200"><ellipse cx="12" cy="12" rx="3.500" ry="14" transform="rotate(42 12 12)" /><ellipse cx="12" cy="12" rx="3.500" ry="14" transform="rotate(-42 12 12)" /><ellipse cx="12" cy="12" rx="11" ry="3" /></g><path d="M8 8l8 7" stroke="#cfe6fa" strokeWidth="2" /></Svg>
        <span className="mt-auto w-full h-[3px] bg-[#7cb4e0]" />
      </button>
      <div className="ml-auto w-px bg-[#6a6a6a]" />
    </nav>
  );
}

export default function App() {
  const [device, setDevice] = useState(2);

  return (
    <div className="h-screen flex flex-col overflow-hidden bg-[#e2ebf3] text-black font-['Liberation_Sans','Noto_Sans_CJK_SC',sans-serif]">
      {/* 标题栏 */}
      <header className="h-7 shrink-0 bg-white flex items-center pl-1 text-[15px] text-[#8c8c8c] font-['Noto_Sans','Noto_Sans_CJK_SC',sans-serif]">
        <Svg size="w-4 h-4"><g stroke="#ecc8bd"><ellipse cx="12" cy="12" rx="3" ry="15" transform="rotate(42 12 12)" /><ellipse cx="12" cy="12" rx="3" ry="15" transform="rotate(-42 12 12)" /></g><circle cx="12" cy="12" r="7" fill="#38485e" /><circle cx="10" cy="11" r="3" fill="#a8c4dc" /></Svg>
        <h1 className="ml-[7px]">2.2 - Proteus 8 Professional - 原理图绘制</h1>
        <div className="ml-auto flex pr-1">
          <button aria-label="最小化" className="w-[58px] flex justify-center"><svg viewBox="0 0 14 14" className="w-3.5 h-3.5" stroke="#8c8c8c"><path d="M1 7.500h12" /></svg></button>
          <button aria-label="还原" className="w-[58px] flex justify-center"><svg viewBox="0 0 14 14" className="w-3.5 h-3.5" stroke="#8c8c8c" fill="none"><path d="M1.500 3.500h9v9h-9zM3.500 3V1.500h9v9H11" /></svg></button>
          <button aria-label="关闭" className="w-[58px] flex justify-center"><svg viewBox="0 0 14 14" className="w-3.5 h-3.5" stroke="#8c8c8c"><path d="M1 1l12 12M13 1L1 13" /></svg></button>
        </div>
      </header>
      <nav className="h-6 shrink-0 bg-white flex items-center gap-[15px] pl-[7px] pb-0.5 pt-1 text-[15px] text-[#666] font-['Noto_Sans','Noto_Sans_CJK_SC',sans-serif]">
        {MENUS.map(m => <button key={m}>{m}</button>)}
      </nav>

      {/* 工具栏 */}
      <div className="h-[38px] shrink-0 flex gap-[5px] bg-linear-to-r from-[#e2ebf3] to-[#e7f3fb]">
        <Bar pad="pl-[3px] pr-0.5">
          <Grip /><div className="w-1" />
          <ToolButtons tools={FILE_TOOLS} /><Sep /><ToolButtons tools={MODULE_TOOLS} /><Sep /><ToolButtons tools={HELP_TOOLS} />
        </Bar>
        <Bar pad="pl-1 pr-[3px]">
          <Grip />
          <Combo label="设计变量" value="Base Design" className="w-[124px] ml-0.5" />
        </Bar>
        <Bar pad="pl-[3px] pr-px">
          <Grip /><div className="w-1" />
          <ToolButtons tools={VIEW_TOOLS} /><Sep /><ToolButtons tools={ORIGIN_TOOLS} /><Sep /><ToolButtons tools={ZOOM_TOOLS} />
        </Bar>
        <Bar pad="pl-0.5 pr-[3px]">
          <Grip /><div className="w-1" />
          <ToolButtons tools={UNDO_TOOLS} /><Sep /><ToolButtons tools={CLIP_TOOLS} /><Sep /><ToolButtons tools={BLOCK_TOOLS} /><Sep /><ToolButtons tools={LIB_TOOLS} />
        </Bar>
        <Bar pad="pl-0.5 pr-px">
          <Grip /><div className="w-1" />
          <ToolButtons tools={WIRE_TOOLS} /><Sep /><ToolButtons tools={SEARCH_TOOLS} /><Sep /><ToolButtons tools={SHEET_TOOLS} /><Sep /><ToolButtons tools={ERC_TOOLS} />
        </Bar>
      </div>

      {/* 标签页 */}
      <div className="h-[34px] shrink-0 flex items-end bg-linear-to-r from-[#e0eaf2] to-[#e7f3fb]">
        <div className="flex self-end h-[30px] w-[169px]">
          <svg viewBox="0 0 22 30" className="w-[22px] h-[30px] shrink-0">
            <defs>
              <linearGradient id="tab" x1="0" y1="0" x2="0" y2="1"><stop offset="0" stopColor="#eef5fb" /><stop offset="1" stopColor="#bfdcf0" /></linearGradient>
              <linearGradient id="run" x1="0" y1="0" x2="0" y2="1"><stop offset="0" stopColor="#1450a8" /><stop offset="1" stopColor="#0808f0" /></linearGradient>
            </defs>
            <path d="M0 26L21 .500h1V30H0z" fill="url(#tab)" /><path d="M0 26L21 .500h1" fill="none" stroke="#6f90ad" />
          </svg>
          <div className="flex-1 flex items-center border-t border-r border-[#6f90ad] bg-linear-to-b from-[#eef5fb] to-[#bfdcf0] pl-1 pr-3 pb-1">
            <Svg size="w-4 h-5">{schematic}</Svg>
            <span className="ml-[7px] text-[15px] leading-5 font-bold text-[#24425f]">原理图绘制</span>
            <button aria-label="关闭标签" className="ml-auto"><svg viewBox="0 0 14 14" className="w-3.5 h-3.5" stroke="#555" strokeWidth="2"><path d="M1 1l12 12M13 1L1 13" /></svg></button>
          </div>
        </div>
        <div className="flex-1 border-b border-[#7797b3]" />
      </div>
      <div className="h-1.5 shrink-0 bg-linear-to-b from-[#bfdcf0] to-[#a6c5dc]" />

      <div className="flex-1 min-h-0 flex bg-[#b4c8d8]">
        {/* 模式工具 */}
        <aside className="w-[38px] shrink-0 flex flex-col bg-[#dfe9f2]">
          <div className="bg-linear-to-r from-[#e3f1fb] via-[#d3e9f8] to-[#b3d5ee] pb-[3px] border-b border-[#9fb9cc]">
            <div className="h-[11px] pt-[3px]"><div className="h-0 border-t-2 border-dotted border-[#9fb4c6]" /></div>
            <SideButtons tools={MODE_TOOLS} /><SideSep /><SideButtons tools={GADGET_TOOLS} /><SideSep /><SideButtons tools={DRAW_TOOLS} />
          </div>
          <div className="mt-1 bg-linear-to-r from-[#e3f1fb] via-[#d3e9f8] to-[#b3d5ee] pb-0.5 border-b border-[#9fb9cc]">
            <div className="h-[11px] pt-[3px]"><div className="h-0 border-t-2 border-dotted border-[#9fb4c6]" /></div>
            <SideButtons tools={ROTATE_TOOLS} />
            <input aria-label="旋转角度" defaultValue="0°" className="block w-[33px] h-[18px] ml-[3px] mt-px mb-[3px] pl-0.5 bg-white text-[13px] outline-none" />
            <SideSep />
            <SideButtons tools={FLIP_TOOLS} />
          </div>
        </aside>

        {/* 预览与器件列表 */}
        <div className="w-[121px] shrink-0 flex flex-col">
          <div className="h-[101px] shrink-0 bg-[#e0e0d0] border-2 border-[#6e7680] py-1">
            <div className="h-full border-y border-[#28a028] px-2"><div className="h-full border border-[#10107a]" /></div>
          </div>
          <div className="mt-1 h-6 shrink-0 flex items-center border-x border-t border-[#6e7680] bg-linear-to-b from-[#eaf2fa] to-[#b8d4e8] pl-[3px] text-[13px]">
            <button aria-label="拾取器件" className="w-4 h-4 rounded-xs bg-[#1048d0] text-white font-bold text-xs leading-4">P</button>
            <button aria-label="库管理" className="ml-1 w-4 h-4 rounded-xs bg-[#1048d0] text-white font-bold text-xs leading-4">L</button>
            <span className="ml-[13px]">DEVICES</span>
          </div>
          <ul role="listbox" aria-label="DEVICES" className="flex-1 bg-white border-x-2 border-b-2 border-t border-[#6e7680] text-[13px] leading-4">
            {DEVICES.map((d, i) => (
              <li key={d} role="option" aria-selected={i === device} onClick={() => setDevice(i)}
                className={`pl-0.5 ${i === device ? 'bg-[#0078d7] text-white' : ''}`}>{d}</li>
            ))}
          </ul>
        </div>

        {/* 图纸 */}
        <main className="flex-1 min-w-0 ml-1 mr-1 flex border-x border-b border-[#5c6468] pl-1.5 pr-2 pb-2 bg-[#ccccbe] bg-[linear-gradient(#aaaa9e_1px,transparent_1px),linear-gradient(90deg,#aaaa9e_1px,transparent_1px)] bg-[size:12px_12px]">
          <PickDialog />
        </main>
      </div>

      {/* 状态栏 */}
      <footer className="h-[37px] shrink-0 flex gap-1.5 bg-[#dce8f2] text-[13px]">
        <div className="w-[319px] flex items-center pl-1 pt-0.5 bg-linear-to-b from-[#e6eff8] via-[#cfe4f3] to-[#b0d2ea] border-r border-[#a9c3d6]">
          <Grip /><div className="w-[3px]" />
          {RUN_TOOLS.map(t => <button key={t.name} aria-label={t.name} className="w-11 h-8 flex items-center justify-center"><Svg>{t.icon}</Svg></button>)}
          <div className="ml-1 mr-1"><Sep /></div>
          <Svg><circle cx="12" cy="12" r="11.500" fill="#8d8d8d" stroke="#a8a8a8" /><circle cx="12" cy="6" r="2" fill="#fff" /><path d="M8.500 10h5v8h2v2h-7v-2h2v-6h-2z" fill="#fff" /></Svg>
          <span className="ml-1 text-sm text-[#8a939c] whitespace-nowrap">No Messages</span>
        </div>
        <div className="w-[411px] flex items-center pl-1 pt-0.5 bg-linear-to-b from-[#e6eff8] via-[#cfe4f3] to-[#b0d2ea] border-r border-[#a9c3d6]">
          <Grip /><span className="ml-1">Root sheet 1</span>
        </div>
        <div className="flex-1 flex items-center pl-0.5 bg-linear-to-b from-[#e6eff8] via-[#cfe4f3] to-[#b0d2ea]"><Grip /></div>
      </footer>

      <Taskbar />
    </div>
  );
}
